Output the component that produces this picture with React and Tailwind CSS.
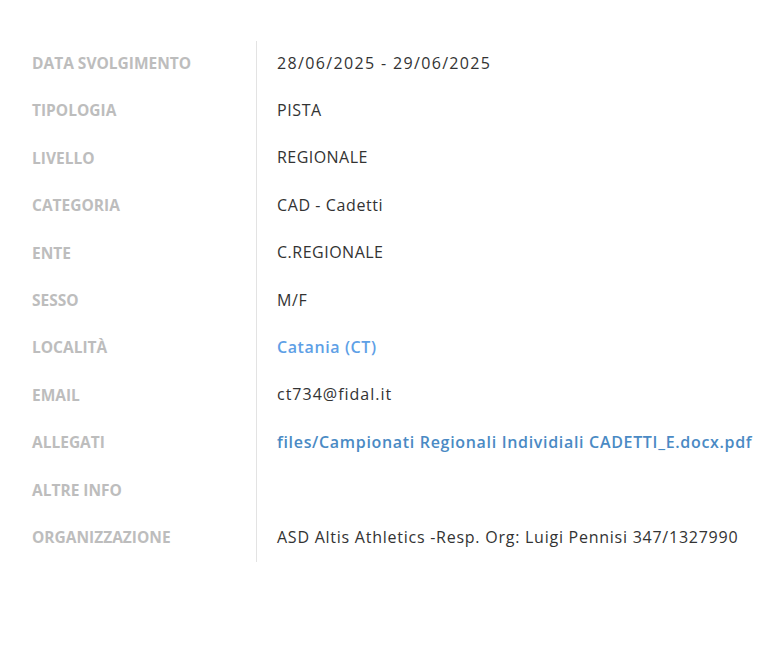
export default function App() {
  const rows = [
    ["DATA SVOLGIMENTO", "28/06/2025 - 29/06/2025", "", "tracking-[1.35px]"],
    ["TIPOLOGIA", "PISTA", "", "tracking-[0.6px]"],
    ["LIVELLO", "REGIONALE", "", "tracking-[0.45px]"],
    ["CATEGORIA", "CAD - Cadetti", "", "tracking-[0.6px]"],
    ["ENTE", "C.REGIONALE", "", "tracking-[0.5px]"],
    ["SESSO", "M/F", "", "tracking-[0.6px]"],
    ["LOCALITÀ", "Catania (CT)", "loc", "tracking-[0.6px]"],
    ["EMAIL", "ct734@fidal.it", "", "tracking-[1px]"],
    ["ALLEGATI", "files/Campionati Regionali Individiali CADETTI_E.docx.pdf", "file", "tracking-[0.68px]"],
    ["ALTRE INFO", "", "", ""],
    ["ORGANIZZAZIONE", "ASD Altis Athletics -Resp. Org: Luigi Pennisi 347/1327990", "", "tracking-[0.75px]"],
  ];
  return (
    <div className="w-[769px] h-[664px] bg-white pt-[41px]" style={{ fontFamily: '"Open Sans", sans-serif' }}>
      <div className="flex flex-col">
        {rows.map(([label, value, kind, tr]) => (
          <div key={label} className="flex h-[47.4px]">
            <div className="w-[257px] shrink-0 pl-8 pb-[2px] border-r border-[#e3e3e3] flex items-center text-[15.5px] font-bold text-[#bdbdbd]">
              {label}
            </div>
            <div
              className={
                "pl-5 pb-1 flex items-center text-[16px] whitespace-nowrap " +
                tr +
                " " +
                (kind === "loc"
                  ? "text-[#5ea0e6] font-semibold"
                  : kind === "file"
                  ? "text-[#4a8ac4] font-semibold"
                  : "text-[#333333]")
              }
            >
              {value}
            </div>
          </div>
        ))}
      </div>
    </div>
  );
}
